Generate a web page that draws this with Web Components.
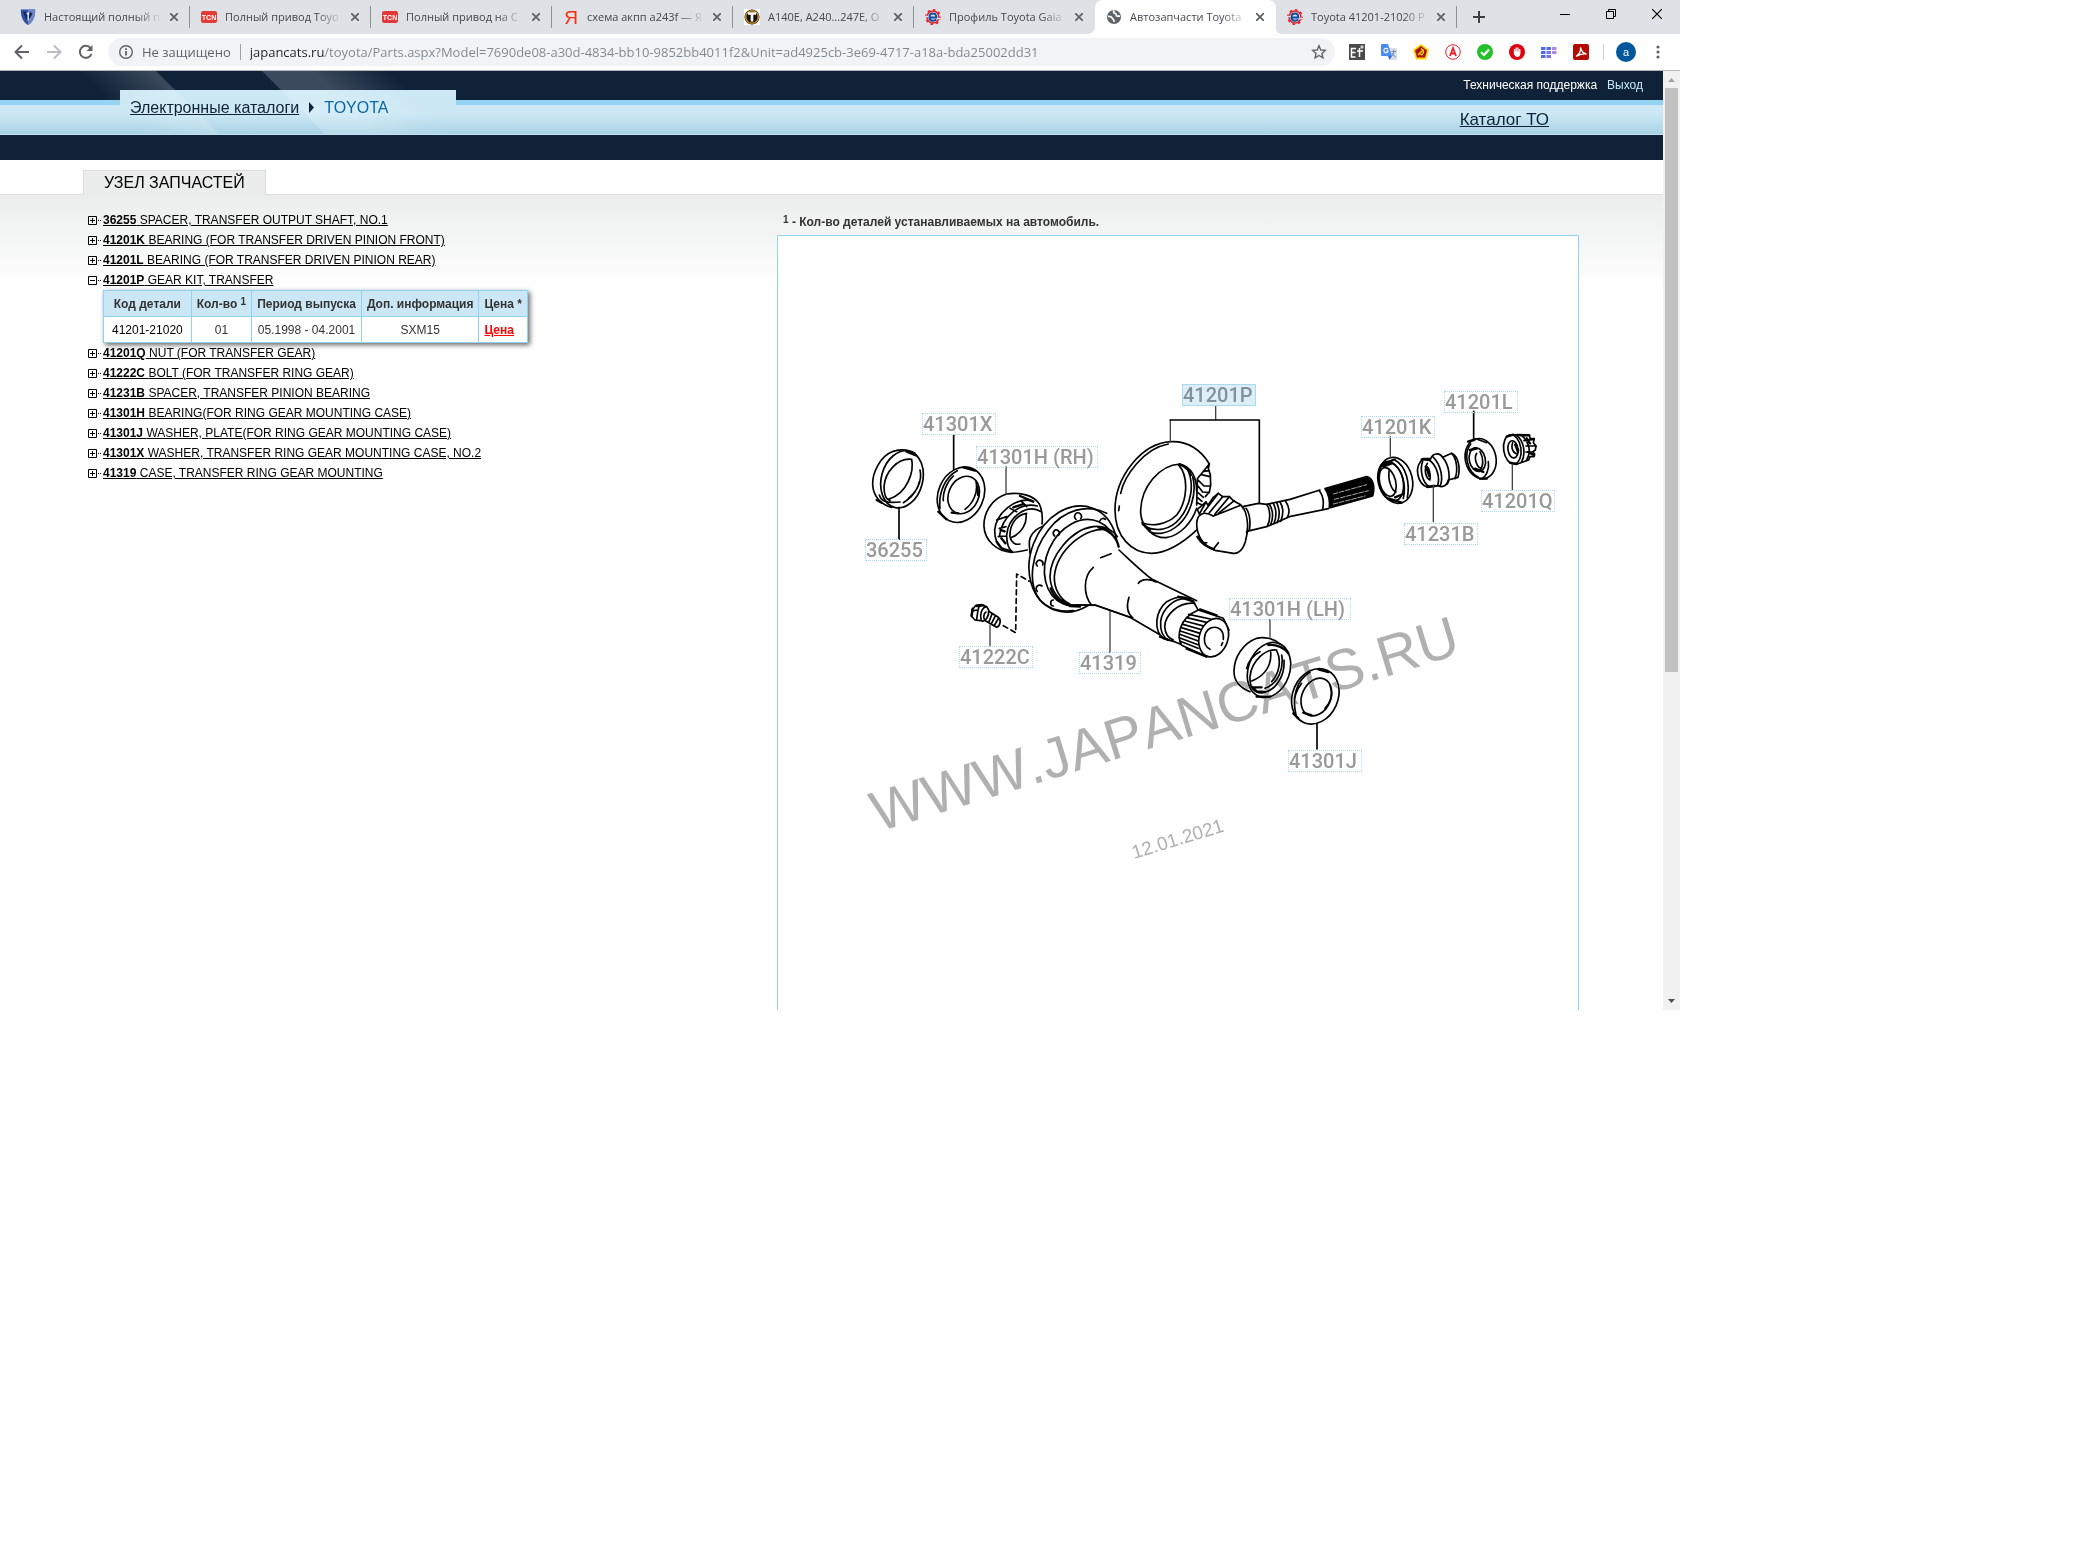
<!DOCTYPE html>
<html lang="ru">
<head>
<meta charset="utf-8">
<title>Автозапчасти Toyota</title>
<style>
    body {
        margin: 0;
        padding-right: 400px;
        background: #fff;
        font: 12px/20px "Liberation Sans", Arial, sans-serif;
        color: #333;
    }
</style>
</head>
<body>
<browser-window>
    <tab-strip slot="tabs">
        <browser-tab icon="shield">Настоящий полный п</browser-tab>
        <browser-tab icon="tcn">Полный привод Toyo</browser-tab>
        <browser-tab icon="tcn">Полный привод на C</browser-tab>
        <browser-tab icon="yandex">схема акпп a243f — Я</browser-tab>
        <browser-tab icon="tmark">A140E, A240...247E, О</browser-tab>
        <browser-tab icon="gear" last>Профиль Toyota Gaia</browser-tab>
        <browser-tab icon="globe" active>Автозапчасти Toyota</browser-tab>
        <browser-tab icon="gear">Toyota 41201-21020 P</browser-tab>
    </tab-strip>
    <address-bar slot="toolbar"></address-bar>
    <div>
        <site-header></site-header>
        <catalog-page>
            <part-row code="36255">SPACER, TRANSFER OUTPUT SHAFT, NO.1</part-row>
            <part-row code="41201K">BEARING (FOR TRANSFER DRIVEN PINION FRONT)</part-row>
            <part-row code="41201L">BEARING (FOR TRANSFER DRIVEN PINION REAR)</part-row>
            <part-row code="41201P" open>GEAR KIT, TRANSFER<part-table slot="details"></part-table></part-row>
            <part-row code="41201Q">NUT (FOR TRANSFER GEAR)</part-row>
            <part-row code="41222C">BOLT (FOR TRANSFER RING GEAR)</part-row>
            <part-row code="41231B">SPACER, TRANSFER PINION BEARING</part-row>
            <part-row code="41301H">BEARING(FOR RING GEAR MOUNTING CASE)</part-row>
            <part-row code="41301J">WASHER, PLATE(FOR RING GEAR MOUNTING CASE)</part-row>
            <part-row code="41301X">WASHER, TRANSFER RING GEAR MOUNTING CASE, NO.2</part-row>
            <part-row code="41319">CASE, TRANSFER RING GEAR MOUNTING</part-row>
            <parts-diagram slot="diagram"></parts-diagram>
        </catalog-page>
    </div>
    <page-scrollbar slot="scroll"></page-scrollbar>
</browser-window>

<script>
const UI_FONT = '"Open Sans", "Noto Sans", sans-serif';

const GEAR = `
    <circle cx="8" cy="8" r="6" fill="#dee1e6" stroke="#e5222a" stroke-width="1.6"/>
    <circle cx="8" cy="8" r="7.2" fill="none" stroke="#e5222a" stroke-width="1.600" stroke-dasharray="2.6 3"/>
    <path d="M4.6 8.600H11.300C11.400 5.600 10 4.400 8 4.400C5.800 4.400 4.400 5.800 4.400 8C4.400 10.400 5.900 11.700 8 11.700C9.400 11.700 10.400 11.300 11.200 10.500" fill="none" stroke="#0d4da1" stroke-width="2"/>
    <path d="M0 7.500H3.500M12.500 9.500H16" stroke="#dee1e6" stroke-width="1.500"/>`;

const FAVICONS = {
    shield: `
        <path d="M.8 .5H15.200C15.200 7 13.500 13 8 16C2.500 13 .8 7 .8 .5Z" fill="#2f4fa0"/>
        <path d="M8 .5H15.200C15.200 7 13.500 13 8 16Z" fill="#6f87c4"/>
        <path d="M3 3L7.200 12V3ZM10 2.500L8 12L12.500 5" fill="#16245c"/>
        <path d="M6 4L9 3V11L7.500 12V6Z" fill="#d6deee"/>`,
    tcn: `
        <rect x="0" y="2" width="16" height="12" rx="2" fill="#e23a36"/>
        <text x="8" y="11" text-anchor="middle" font-family="Liberation Sans" font-size="7" font-weight="700" fill="#fff">TCN</text>`,
    yandex: `<text x="8" y="15" text-anchor="middle" font-family="Liberation Sans" font-size="19" fill="#fc2f0f">Я</text>`,
    tmark: `
        <rect width="16" height="16" fill="#fff"/>
        <circle cx="8" cy="8" r="7.500" fill="#15120c"/>
        <circle cx="8" cy="8" r="6.300" fill="none" stroke="#c8912b" stroke-width="1.500"/>
        <path d="M4 4.500H12M8 4.500V12.500" stroke="#fff" stroke-width="2.600"/>`,
    gear: GEAR,
    globe: `
        <circle cx="8" cy="8" r="7" fill="#5f6368"/>
        <path d="M2 7.500C4 7 6 8 6.500 9.500C7 10.800 8.500 10.500 8 13M8.500 1.500C6.500 3 8 4.500 9.500 4.500C11.500 5 9 7 11.500 7.200H14" fill="none" stroke="#fff" stroke-width="1.700"/>`
};

/* ---------- browser chrome ---------- */

class BrowserWindow extends HTMLElement {
    constructor() {
        super();
        this.attachShadow({ mode: "open" }).innerHTML = `
            <style>
                :host { display: block; }
                .view { display: flex; border-top: 1px solid #b6b6b8; }
                .page { flex: 1; min-width: 0; }
            </style>
            <slot name="tabs"></slot>
            <slot name="toolbar"></slot>
            <div class="view">
                <div class="page"><slot></slot></div>
                <slot name="scroll"></slot>
            </div>
        `;
    }
}

class TabStrip extends HTMLElement {
    constructor() {
        super();
        this.attachShadow({ mode: "open" }).innerHTML = `
            <style>
                :host { display: flex; height: 34px; padding-left: 9px; background: #dee1e6; }
                button { display: block; border: 0; padding: 0; background: none; color: #3c4043; }
                .add { width: 44px; }
                .win { display: flex; margin-left: auto; }
                .win button { width: 46px; height: 28px; color: #000; }
                svg { display: block; margin: auto; fill: none; stroke: currentColor; }
            </style>
            <slot></slot>
            <button class="add" aria-label="Новая вкладка"><svg width="12" height="12" stroke-width="2"><path d="M6 0V12M0 6H12"/></svg></button>
            <div class="win">
                <button aria-label="Свернуть"><svg width="10" height="10"><path d="M0 5.500H10"/></svg></button>
                <button aria-label="Восстановить"><svg width="10" height="10"><path d="M.5 2.500H7.500V9.500H.5ZM2.500 2.500V.5H9.500V7.500H7.500"/></svg></button>
                <button aria-label="Закрыть"><svg width="10" height="10" stroke-width="1.200"><path d="M0 0L10 10M10 0L0 10"/></svg></button>
            </div>
        `;
    }
}

class BrowserTab extends HTMLElement {
    constructor() {
        super();
        this.attachShadow({ mode: "open" }).innerHTML = `
            <style>
                :host {
                    display: flex;
                    align-items: center;
                    box-sizing: border-box;
                    width: 181px;
                    padding: 0 7px 0 11px;
                    position: relative;
                    border-right: 1px solid #8f9297;
                    border-image: linear-gradient(transparent 7px, #8f9297 7px 27px, transparent 27px) 1;
                    font: 11px/34px ${UI_FONT};
                    color: #45484c;
                }
                :host([active]), :host([last]) { border-right-color: transparent; border-image: none; }
                :host([active]) { background: #fff; border-radius: 8px 8px 0 0; }
                :host([active])::before, :host([active])::after {
                    content: "";
                    position: absolute;
                    bottom: 0;
                    width: 8px;
                    height: 8px;
                }
                :host([active])::before { left: -8px; background: radial-gradient(circle at 0 0, transparent 8px, #fff 8px); }
                :host([active])::after { right: -8px; background: radial-gradient(circle at 100% 0, transparent 8px, #fff 8px); }
                .title {
                    flex: 1;
                    margin: 0 2px 0 8px;
                    white-space: nowrap;
                    -webkit-mask: linear-gradient(90deg, #000 calc(100% - 28px), transparent calc(100% - 2px));
                    mask: linear-gradient(90deg, #000 calc(100% - 28px), transparent calc(100% - 2px));
                }
                button { border: 0; padding: 4px; background: none; color: #5f6368; }
                svg { display: block; flex: none; }
            </style>
            <svg width="16" height="16">${FAVICONS[this.getAttribute("icon")]}</svg>
            <span class="title"><slot></slot></span>
            <button aria-label="Закрыть вкладку"><svg width="8" height="8" fill="none" stroke="currentColor" stroke-width="1.800"><path d="M0 0L8 8M8 0L0 8"/></svg></button>
        `;
    }
}

class AddressBar extends HTMLElement {
    constructor() {
        super();
        this.attachShadow({ mode: "open" }).innerHTML = `
            <style>
                :host {
                    display: flex;
                    align-items: center;
                    height: 36px;
                    padding-left: 6px;
                    padding-right: 12px;
                    background: #fff;
                    font: 13px/28px ${UI_FONT};
                    color: #5f6368;
                }
                button { flex: none; width: 32px; height: 28px; border: 0; padding: 0; background: none; color: #5f6368; }
                svg { display: block; margin: auto; }
                .box {
                    flex: 1;
                    display: flex;
                    align-items: center;
                    height: 28px;
                    margin: 0 6px;
                    padding-left: 10px;
                    border-radius: 14px;
                    background: #f1f3f4;
                }
                .box > svg { margin: 0 8px 0 0; }
                .sep { width: 1px; height: 16px; margin: 0 9px; background: #9aa0a6; }
                .bar { width: 1px; height: 16px; margin: 0 6px; background: #d0d2d5; }
                input {
                    flex: 1;
                    min-width: 0;
                    border: 0;
                    padding: 0;
                    outline: 0;
                    font: inherit;
                    color: transparent;
                    background: linear-gradient(90deg, #202124 74px, #80868b 74px);
                    -webkit-background-clip: text;
                    background-clip: text;
                }
                .menu { width: 20px; margin-left: 6px; }
            </style>
            <button aria-label="Назад"><svg width="16" height="16" fill="none" stroke="currentColor" stroke-width="2"><path d="M15 8H2M8 1.500L1.500 8L8 14.500"/></svg></button>
            <button aria-label="Вперёд"><svg width="16" height="16" fill="none" stroke="#babcbe" stroke-width="2"><path d="M1 8H14M8 1.500L14.500 8L8 14.500"/></svg></button>
            <button aria-label="Обновить"><svg width="16" height="16" fill="none" stroke="currentColor" stroke-width="2"><path d="M13.500 10A6 6 0 1 1 12.500 4"/><path d="M14.500 1V7H8.500Z" fill="currentColor" stroke="none"/></svg></button>
            <div class="box">
                <svg width="16" height="16" fill="none" stroke="currentColor"><circle cx="8" cy="8" r="6.300" stroke-width="1.400"/><path d="M8 7V11.500M8 4.300V6" stroke-width="1.800"/></svg>
                <span id="sec">Не защищено</span>
                <span class="sep"></span>
                <input aria-labelledby="sec" value="japancats.ru/toyota/Parts.aspx?Model=7690de08-a30d-4834-bb10-9852bb4011f2&amp;Unit=ad4925cb-3e69-4717-a18a-bda25002dd31">
                <button aria-label="Добавить в закладки"><svg width="16" height="16" fill="none" stroke="currentColor" stroke-width="1.400"><path d="M8 1.800L9.800 6L14.300 6.400L10.900 9.400L11.900 13.800L8 11.500L4.100 13.800L5.100 9.400L1.700 6.400L6.200 6Z"/></svg></button>
            </div>
            <button aria-label="ET"><svg width="16" height="16"><path d="M0 0H16V16H0Z" fill="#4b4b4b"/><path d="M7 4.500H2.500V13H6.500M2.500 8.500H6.500M8 7H14M10.500 4V13" fill="none" stroke="#fff" stroke-width="1.500"/><circle cx="13" cy="3" r="1.700" fill="#ccc"/></svg></button>
            <button aria-label="Переводчик"><svg width="16" height="16"><path d="M6 4H15Q16 4 16 5V15Q16 16 15 16H9Z" fill="#d9dce0"/><path d="M1 0H7L11 12H1Q0 12 0 11V1Q0 0 1 0Z" fill="#4a8af4"/><path d="M7 12H11L8.500 16Z" fill="#3367d6"/><path d="M7 5.500A2.200 2.200 0 1 0 7.200 7H5.200" fill="none" stroke="#fff" stroke-width="1.100"/><path d="M10.500 7.500H15M12.800 6V7.500C12.500 10 11.800 11.500 10.500 12.500M11.500 9Q12.500 12 14.800 13" fill="none" stroke="#6b8dad"/></svg></button>
            <button aria-label="Совет"><svg width="16" height="16"><path d="M8 0L16 5.800L13 15.500H3L0 5.800Z" fill="#ffd400"/><path d="M8 2L14 6.500L12 13.500H4L2 6.500Z" fill="#a61311"/><path d="M5 11L10.500 5.500M8 4.500Q12.500 7 9 11L6 9" fill="none" stroke="#ffd400" stroke-width="1.300"/></svg></button>
            <button aria-label="A"><svg width="16" height="16" fill="none" stroke="#e8212d"><circle cx="8" cy="8" r="7.300" fill="#fff"/><path d="M5 12L8 4L11 12M6 9.500H10" stroke-width="1.800"/></svg></button>
            <button aria-label="Проверка"><svg width="16" height="16"><circle cx="8" cy="8" r="8" fill="#23c02b"/><path d="M4 8.300L7 11L12 5.500" fill="none" stroke="#fff" stroke-width="2.200"/></svg></button>
            <button aria-label="Блокировщик"><svg width="16" height="16"><circle cx="8" cy="8" r="8" fill="#e1000f"/><path d="M5.500 9V5M7.200 8V3.500M9 8V3.500M10.700 9V5" stroke="#fff" stroke-width="1.300"/><path d="M4.900 7.500H11.300V10Q11 13 8.500 13Q6.500 13 4.900 10.500Z" fill="#fff"/></svg></button>
            <button aria-label="Сетка"><svg width="16" height="16"><path d="M0 3H4.500V6H0ZM5.500 3H10V6H5.500ZM0 7H4.500V10H0ZM0 11H4.500V14H0Z" fill="#4f6bee"/><path d="M11 3H15.500V6H11ZM11 7H15.500V10H11Z" fill="#b387dd"/><path d="M5.500 7H10V10H5.500ZM5.500 11H10V14H5.500Z" fill="#7b74e6"/></svg></button>
            <button aria-label="PDF"><svg width="16" height="16"><rect width="16" height="16" rx="2" fill="#b30b00"/><path d="M3 12.500C6 10.500 8 7 7.500 3.500C8.500 8 10.500 9.500 13.500 10C10 9.500 6 10.500 3 12.500Z" fill="none" stroke="#fff" stroke-width="1.300"/></svg></button>
            <span class="bar"></span>
            <button aria-label="Профиль"><svg width="20" height="20"><circle cx="10" cy="10" r="10" fill="#01579b"/><text x="10" y="14" text-anchor="middle" font-size="11" fill="#fff">a</text></svg></button>
            <button class="menu" aria-label="Меню"><svg width="4" height="16" fill="currentColor"><circle cx="2" cy="3" r="1.600"/><circle cx="2" cy="8" r="1.600"/><circle cx="2" cy="13" r="1.600"/></svg></button>
        `;
    }
}

class PageScrollbar extends HTMLElement {
    constructor() {
        super();
        this.attachShadow({ mode: "open" }).innerHTML = `
            <style>
                :host { display: flex; flex-direction: column; width: 17px; background: #f1f1f1; }
                svg { display: block; flex: none; }
                .track { flex: 1; padding: 0 2px; }
                .thumb { height: 64.500%; background: #c1c1c1; }
            </style>
            <svg width="17" height="17"><path d="M5 11H12L8.500 7Z" fill="#a3a3a3"/></svg>
            <div class="track"><div class="thumb"></div></div>
            <svg width="17" height="17"><path d="M5 6H12L8.500 10Z" fill="#505050"/></svg>
        `;
    }
}

/* ---------- site ---------- */

class SiteHeader extends HTMLElement {
    constructor() {
        super();
        this.attachShadow({ mode: "open" }).innerHTML = `
            <style>
                :host { display: block; position: relative; border-bottom: 25px solid #102238; }
                .glare { position: absolute; top: 0; left: 0; }
                .top {
                    display: flex;
                    justify-content: flex-end;
                    gap: 10px;
                    height: 22px;
                    padding: 7px 20px 0 0;
                    background: #102238;
                    line-height: 14px;
                }
                .top a { color: #fff; text-decoration: none; }
                .top a + a { color: #c4ebfa; }
                .strip {
                    display: flex;
                    justify-content: space-between;
                    height: 29px;
                    padding-right: 114px;
                    border-top: 5px solid #95d3f2;
                    border-bottom: 1px solid #c3e2ef;
                    background: linear-gradient(#cce8f4 30%, #a9d2e5);
                    font-size: 16px;
                    line-height: 24px;
                }
                nav {
                    display: flex;
                    align-items: flex-start;
                    box-sizing: border-box;
                    width: 336px;
                    margin: -15px 0 0 120px;
                    padding: 6px 10px 0;
                    background: linear-gradient(#cce8f4 15px, transparent 15px);
                }
                nav svg { margin: 6px 10px 0; }
                nav b { font-weight: 400; color: #0867a7; }
                nav a, nav b, nav svg { position: relative; z-index: 1; }
                .strip a { color: #102238; }
                .strip .to { margin-top: 3px; font-size: 17px; }
            </style>
            <div class="top"><a href="#support">Техническая поддержка</a><a href="#exit">Выход</a></div>
            <div class="strip">
                <nav>
                    <a href="#catalogs">Электронные каталоги</a>
                    <svg width="5" height="11"><path d="M0 0L5 5.500L0 11Z" fill="#102238"/></svg>
                    <b>TOYOTA</b>
                </nav>
                <a class="to" href="#to">Каталог ТО</a>
            </div>
            <svg class="glare" width="460" height="63">
                <linearGradient id="g1" gradientUnits="userSpaceOnUse" x1="156" y1="0" x2="116" y2="40"><stop stop-color="#fff" stop-opacity=".18"/><stop offset="1" stop-color="#fff" stop-opacity="0"/></linearGradient>
                <linearGradient id="g2" gradientUnits="userSpaceOnUse" x1="262" y1="0" x2="326" y2="-64"><stop stop-color="#fff" stop-opacity=".18"/><stop offset=".4" stop-color="#fff" stop-opacity=".18"/><stop offset="1" stop-color="#fff" stop-opacity="0"/></linearGradient>
                <path d="M60 0H156L219 63H60Z" fill="url(#g1)"/>
                <path d="M262 0H460V63H325Z" fill="url(#g2)"/>
            </svg>
        `;
    }
}

class CatalogPage extends HTMLElement {
    constructor() {
        super();
        this.attachShadow({ mode: "open" }).innerHTML = `
            <style>
                :host { display: block; }
                header { padding: 10px 83px 0; border-bottom: 1px solid #dcdcdc; }
                h1 {
                    width: max-content;
                    margin: 0 0 -1px;
                    padding: 0 20px;
                    border: 1px solid #dcdcdc;
                    border-bottom: 0;
                    background: #ebeded;
                    font-size: 16px;
                    font-weight: 400;
                    line-height: 24px;
                    color: #000;
                }
                main {
                    display: grid;
                    grid-template-columns: 1fr 802px;
                    padding: 0 84px 0 83px;
                    background: linear-gradient(#ebeded, #fff 95px);
                }
                .tree { padding: 15px 0 0 5px; }
                .note { margin: 0; padding: 17px 0 3px 6px; font-weight: 700; }
                sup { font-size: 10px; line-height: 0; vertical-align: 3px; }
            </style>
            <header><h1>УЗЕЛ ЗАПЧАСТЕЙ</h1></header>
            <main>
                <div class="tree"><slot></slot></div>
                <div>
                    <p class="note"><sup>1</sup> - Кол-во деталей устанавливаемых на автомобиль.</p>
                    <slot name="diagram"></slot>
                </div>
            </main>
        `;
    }
}

class PartRow extends HTMLElement {
    constructor() {
        super();
        const open = this.hasAttribute("open");
        this.attachShadow({ mode: "open" }).innerHTML = `
            <style>
                :host { display: block; }
                .row { display: flex; align-items: center; height: 20px; }
                button { width: 15px; height: 9px; border: 0; padding: 0; background: none; }
                svg { display: block; fill: none; stroke: #000; }
                a { color: #000; }
                ::slotted([slot=details]) { margin-left: 15px; }
            </style>
            <div class="row">
                <button aria-label="Показать детали"><svg width="15" height="9"><path d="M.5 .5H8.500V8.500H.5ZM2 4.500H7${open ? "" : "M4.500 2V7"}M10 4.500H11M12 4.500H13"/></svg></button>
                <a href="#${this.getAttribute("code")}"><b>${this.getAttribute("code")}</b> <slot></slot></a>
            </div>
            <slot name="details"></slot>
        `;
    }
}

class PartTable extends HTMLElement {
    constructor() {
        super();
        this.attachShadow({ mode: "open" }).innerHTML = `
            <style>
                :host { display: block; width: max-content; box-shadow: 2px 2px 5px rgba(0,0,0,0.6); }
                table { border-collapse: collapse; background: #fff; line-height: 14px; text-align: center; }
                th, td { height: 25px; padding: 0 5px; border: 1px solid #8fd2f2; }
                th { background: #cbe7f5; }
                tr > :first-child { padding: 0 8px; }
                td:first-child { color: #000; }
                td:last-child { text-align: left; }
                sup { font-size: 10px; line-height: 0; vertical-align: 3px; }
                a { font-weight: 700; color: #f00; }
            </style>
            <table>
                <tr><th>Код детали</th><th>Кол-во <sup>1</sup></th><th>Период выпуска</th><th>Доп. информация</th><th>Цена *</th></tr>
                <tr><td>41201-21020</td><td>01</td><td>05.1998 - 04.2001</td><td>SXM15</td><td><a href="#price">Цена</a></td></tr>
            </table>
        `;
    }
}

class CalloutLabel extends HTMLElement {
    constructor() {
        super();
        this.attachShadow({ mode: "open" }).innerHTML = `
            <style>
                :host { position: absolute; display: block; }
                a {
                    display: block;
                    height: 20px;
                    border: 1px dotted #a9dbf0;
                    font: 500 20px/20px Roboto, "Liberation Sans", sans-serif;
                    white-space: nowrap;
                    color: #999;
                    text-decoration: none;
                }
                :host([active]) a { border-style: solid; background: #ddeef7; color: #82929b; }
            </style>
            <a href="#"><slot></slot></a>
        `;
    }
}

// callouts of the picture: code, left, top, width
const CALLOUTS = [
    ["41301X", 144, 177, 74], ["41301H (RH)", 198, 210, 122], ["36255", 87, 303, 62], ["41222C", 181, 410, 74],
    ["41201P", 404, 148, 74, true], ["41201K", 583, 180, 74], ["41201L", 666, 155, 74], ["41201Q", 703, 254, 74],
    ["41231B", 626, 287, 74], ["41319", 301, 416, 62], ["41301H (LH)", 451, 362, 122], ["41301J", 510, 514, 74]
];

class PartsDiagram extends HTMLElement {
    constructor() {
        super();
        const labels = CALLOUTS.map(([code, x, y, w, active]) =>
            `<callout-label style="left:${x}px;top:${y}px;width:${w}px" ${active ? "active" : ""}>${code}</callout-label>`).join("");

        // splines on the case end
        let splines = "";
        for (let i = 0; i < 9; i++) {
            const y = 703 + i * 10;
            const x = 566 - Math.round(Math.sin(i / 8 * 1.8) * 28);
            const ex = 640 - Math.round(Math.sin((i + 1) / 9 * 1.7) * 46);
            splines += `M${x} ${y}L${ex} ${y + 14 + i}`;
        }

        this.attachShadow({ mode: "open" }).innerHTML = `
            <style>
                :host {
                    display: block;
                    position: relative;
                    height: 774px;
                    border: 1px solid #95d3f2;
                    border-bottom: 0;
                    background: #fff;
                }
                svg { display: block; }
                .ink { fill: none; stroke: #000; stroke-width: 5; stroke-linecap: round; stroke-linejoin: round; }
                .w { fill: #fff; }
                .k { fill: #000; }
                .t { stroke-width: 7; }
                .lead { stroke: #444; stroke-width: 4; }
                .mark { font-family: "Liberation Sans", sans-serif; font-kerning: none; fill: #b0b0b0; mix-blend-mode: darken; }
            </style>
            <svg width="800" height="774" viewBox="778 236 800 774">
                <!-- ring gear, pinion and shaft -->
                <g class="ink" transform="translate(1000 380) scale(.33333)">
                    <path class="w" d="M592 448C550 488 505 518 455 520C395 520 345 470 345 390C345 290 425 190 512 185C565 182 605 212 628 252L592 298Z" stroke="none"/>
                    <path d="M592 448C550 488 505 518 455 520C395 520 345 470 345 390C345 290 425 190 512 185C565 182 605 212 628 252"/>
                    <path d="M505 192C430 205 372 290 362 340M358 378L356 392"/>
                    <path class="w" d="M540 252C480 255 420 320 422 400C426 445 462 475 498 473C538 468 575 430 590 385"/>
                    <path d="M540 252C575 262 590 290 590 335"/>
                    <path d="M535 254C568 290 562 365 530 405C500 435 455 440 426 428M560 262C585 310 575 370 540 415C510 452 470 455 436 440M578 290C592 340 570 405 535 435C505 462 470 465 450 455"/>
                    <path class="t" d="M540 254C560 262 570 275 573 285M428 432L450 450"/>
                    <path d="M628 252L592 296M628 252L625 266L631 284L632 316L628 336L616 350M592 296L590 375M592 298L612 318L629 318M594 318L608 336L628 338M592 336L610 352M592 352L606 364M592 368L604 374M604 284L630 290M612 274L628 272"/>
                    <path class="w" d="M598 402L592 388L618 366L624 376L640 352L655 340L668 350L688 350L700 362L722 374C742 400 748 440 736 485C728 512 712 522 700 520L645 511C610 498 590 468 590 430C592 400 612 392 640 408"/>
                    <path d="M598 402L618 366M612 396L655 340M628 398L668 350M645 402L688 350M655 400L703 362M640 408L722 376M592 470C598 480 610 492 620 488M655 488L640 508"/>
                    <path class="t" d="M592 470C605 492 620 500 642 508"/>
                    <path class="w" d="M728 380L775 370L800 373L960 330L980 325L985 388L865 410L800 438L740 455Z" stroke="none"/>
                    <path d="M728 380L775 370L800 373L870 358L960 330M740 455L750 452L800 440L828 428L868 410L985 386M728 380C742 400 746 440 740 460M738 385C750 400 752 430 748 450"/>
                    <path d="M800 373C812 390 812 420 802 438M808 372C820 392 820 414 812 434M820 370C830 390 830 410 822 430M830 368C838 385 840 408 832 428M840 366C850 382 850 405 842 424M856 362C868 380 870 398 862 412M958 332C968 345 972 368 968 388"/>
                    <path class="k" d="M975 326L1100 290C1120 295 1126 320 1118 348L988 384C990 360 985 340 975 326Z"/>
                    <path d="M1000 342L1100 314M1003 358L1105 332M1000 372L1095 348" stroke="#fff" stroke-width="2" stroke-dasharray="14 5"/>
                    <!-- bracket of the gear kit -->
                    <path class="lead" d="M647 76V120M511 120V185"/>
                    <path d="M511 120H778V368"/>
                </g>

                <!-- left side: rings, bearing, flange, bolt -->
                <g class="ink" transform="translate(840 370) scale(.33333)">
                    <path d="M225 250C205 238 180 238 160 244C120 258 96 310 98 345C100 375 118 402 155 412"/>
                    <ellipse cx="186" cy="328" rx="62" ry="87" transform="rotate(15 186 328)"/>
                    <path d="M215 268C175 262 135 305 132 350C132 375 138 388 150 392M215 268C222 300 205 370 145 388M240 300C248 330 230 375 190 398M205 385C225 370 235 350 238 335M118 375C124 395 140 400 180 396"/>
                    <path class="t" d="M200 245L228 256M110 390L125 398"/>
                    <ellipse cx="363" cy="374" rx="68" ry="86" transform="rotate(24 363 374)"/>
                    <ellipse cx="371" cy="375" rx="45" ry="58" transform="rotate(24 371 375)"/>
                    <path d="M352 302C315 320 295 370 300 415M340 318C318 338 308 370 310 392M408 335C415 365 400 400 375 418"/>
                    <path class="t" d="M370 292L405 302M295 425L320 448M335 428L355 430M412 350L414 375"/>
                    <path d="M598 402C580 375 540 366 500 372C455 385 430 430 432 470C434 510 470 545 515 547C540 546 560 540 562 540M598 402C606 420 608 445 606 462"/>
                    <path d="M575 392C530 382 470 425 464 480C464 510 475 530 490 538M592 408C540 395 485 440 478 500M604 425C560 400 505 440 500 495C500 520 505 535 515 545M560 430C525 435 508 470 510 500C514 520 528 525 540 522M558 432C562 460 545 490 515 502M470 450L500 440M478 475L498 470M475 500L498 498M510 415L530 425M545 395L560 410"/>
                    <path class="t" d="M540 378L580 395M470 515L485 535L515 545M520 412L550 402M482 480L494 484M484 505L496 520"/>
                    <path class="w" d="M640 468C600 460 565 490 568 525L570 550"/>
                    <ellipse class="w" cx="700" cy="567" rx="128" ry="163" transform="rotate(21 700 567)"/>
                    <path d="M800 430C740 400 670 420 625 480C575 545 560 640 600 690C625 718 660 726 700 722"/>
                    <ellipse class="w" cx="722" cy="578" rx="103" ry="134" transform="rotate(24 722 578)"/>
                    <path class="w" d="M838 540C830 490 800 465 760 470C690 480 630 560 630 620C632 665 660 700 690 705L770 706L900 760L1080 770L900 598Z" stroke="none"/>
                    <path d="M832 500C820 480 790 466 760 470C690 480 630 560 630 620C632 665 660 700 700 706M805 480C740 465 650 540 643 620C642 655 660 690 690 702"/>
                    <path class="t" d="M632 655C642 685 665 700 690 706M775 472C805 478 830 500 836 530M690 708L720 710"/>
                    <path d="M708 448A10 11 0 1 1 722 446M644 498A9 10 0 1 1 656 496M780 452A10 11 0 0 1 796 448M608 585A10 10 0 1 0 592 588M606 648A10 10 0 1 0 592 664M640 690A8 9 0 1 0 640 708"/>
                    <path d="M690 705L765 705L870 742"/>
                    <!-- bolt -->
                    <path d="M408 706L396 720L394 738L405 750L420 752M408 706L425 704L440 710M400 722L414 720L418 708M414 720L410 748M440 710C425 712 418 735 424 752C436 758 448 738 446 720ZM438 726C430 730 430 745 434 750"/>
                    <path d="M446 724L475 742C484 748 482 766 470 772L436 752M456 732L446 758M466 738L454 762M476 744L462 768"/>
                    <path class="t" d="M398 716L395 738M410 708L430 706"/>
                    <path d="M490 767L527 788L530 612L568 634" stroke-dasharray="15 11"/>
                    <path class="lead" d="M450 765V828M810 722V848M498 290V372"/>
                    <path d="M341 195V300M177 412V508"/>
                </g>

                <!-- case body -->
                <g class="ink" transform="translate(1000 380) scale(.33333)">
                    <path d="M357 510C400 550 425 575 455 597L590 662M225 675H285L390 712L490 770M280 562C248 590 250 645 275 676M302 533L333 521M415 610C425 596 450 596 468 606M387 652C378 680 382 700 398 714"/>
                    <path class="w" d="M582 668C560 645 530 648 500 665C465 695 460 750 490 775L520 784L560 800L600 700Z"/>
                    <path d="M570 656C520 650 485 690 482 725C480 755 490 772 505 780M584 670C535 665 495 705 494 740C496 765 505 775 520 780"/>
                    <path class="w" d="M595 690L670 715L687 750L620 830L545 796C530 770 535 715 595 690Z"/>
                    <path d="${splines}"/>
                    <ellipse class="w" cx="641" cy="773" rx="43" ry="59" transform="rotate(18 641 773)"/>
                    <path d="M630 808C605 795 610 755 632 744C655 736 672 750 670 778M668 788L664 796"/>
                    <path class="t" d="M535 650L580 664M560 806L620 830M600 688L650 706M480 770L505 780"/>
                </g>

                <!-- right side bearings and nut -->
                <g class="ink" transform="translate(1340 370) scale(.33333)">
                    <ellipse cx="167" cy="331" rx="50" ry="70" transform="rotate(-14 167 331)"/>
                    <ellipse cx="152" cy="334" rx="37" ry="60" transform="rotate(-14 152 334)"/>
                    <ellipse cx="143" cy="336" rx="24" ry="44" transform="rotate(-14 143 336)"/>
                    <path d="M148 298C142 330 155 360 168 366M150 276C185 290 200 340 190 385M165 270C200 290 210 340 202 384M118 300L130 280L165 268"/>
                    <path class="t" d="M125 285L160 270M145 385L185 398M130 290L155 280M165 382L190 372"/>
                    <path class="w" d="M250 266L272 266C278 250 298 246 308 262L335 250C355 258 362 295 354 322L325 330C320 350 305 353 295 347L262 352C232 340 220 290 250 266Z"/>
                    <path d="M262 266C295 285 300 330 292 348M278 260C305 285 310 330 300 348M308 262C328 285 332 325 322 342M335 250C350 265 355 300 345 326M248 274C238 300 248 340 268 350M262 280C250 300 258 325 270 330M256 290C262 285 272 300 270 330"/>
                    <path class="t" d="M245 268L270 270M258 290L268 318M262 350L285 348"/>
                    <ellipse cx="422" cy="266" rx="46" ry="61" transform="rotate(-12 422 266)"/>
                    <ellipse cx="412" cy="269" rx="24" ry="36" transform="rotate(-12 412 269)"/>
                    <path d="M392 222C370 250 380 305 415 322M410 250C400 265 412 295 425 295M420 245C432 265 430 290 420 300M445 275C448 295 440 318 428 324M412 208L440 218"/>
                    <path class="t" d="M390 240L410 236M405 296L430 306M384 215L405 208M420 326L440 326"/>
                    <path class="w" d="M510 196L535 194L568 195L570 205L583 206L580 218L588 228L586 240L578 246L584 252L582 260L570 260L566 270L530 283Z"/>
                    <ellipse class="w" cx="517" cy="238" rx="26" ry="44" transform="rotate(-8 517 238)"/>
                    <ellipse cx="519" cy="238" rx="15" ry="26" transform="rotate(-8 519 238)"/>
                    <path d="M530 196C555 215 556 255 545 275M545 196C572 220 572 250 560 270M552 212L582 208M558 228L588 228M558 246L580 246M518 218C512 235 520 250 532 252M525 225L536 240"/>
                    <path class="t" d="M500 200L520 194M540 196L568 196M560 205L570 220M565 246L582 256M510 278L530 282M526 224L534 246"/>
                    <path class="lead" d="M151 200V262M517 283V360M280 345V455"/>
                    <path d="M401 124V212"/>
                </g>

                <!-- lower rings -->
                <g class="ink" transform="translate(1080 580) scale(.33333)">
                    <path d="M600 192C580 174 550 170 530 175C490 190 462 230 462 275C462 302 478 322 510 335"/>
                    <ellipse cx="567" cy="270" rx="62" ry="85" transform="rotate(20 567 270)"/>
                    <path d="M590 210C560 205 515 240 510 290C508 325 525 342 550 338C590 330 615 285 612 240M572 216C576 260 550 290 515 303M590 212C605 240 598 280 575 305M605 225C612 265 595 310 555 325M500 265C505 245 520 225 540 215"/>
                    <path class="t" d="M565 195C590 192 615 205 625 220M515 320L530 334L556 336M520 322H545M530 350L570 350"/>
                    <ellipse cx="706" cy="349" rx="68" ry="86" transform="rotate(24 706 349)"/>
                    <ellipse cx="709" cy="351" rx="43" ry="59" transform="rotate(24 709 351)"/>
                    <path d="M690 277C650 300 635 350 648 405M665 310C650 330 642 350 644 370M750 315C760 345 750 370 735 385"/>
                    <path class="t" d="M715 268L745 276M640 400L655 415M670 398L695 406"/>
                    <path class="lead" d="M570 118V172"/>
                    <path d="M711 430V507"/>
                </g>

                <text class="mark" x="878" y="832" font-size="57" transform="rotate(-17 878 832)">WWW.JAPANCATS.RU</text>
                <text class="mark" x="1134" y="859" font-size="19" transform="rotate(-17 1134 859)">12.01.2021</text>
            </svg>
            ${labels}
        `;
    }
}

customElements.define("page-scrollbar", PageScrollbar);
customElements.define("callout-label", CalloutLabel);
customElements.define("parts-diagram", PartsDiagram);
customElements.define("part-table", PartTable);
customElements.define("part-row", PartRow);
customElements.define("catalog-page", CatalogPage);
customElements.define("site-header", SiteHeader);
customElements.define("browser-tab", BrowserTab);
customElements.define("tab-strip", TabStrip);
customElements.define("address-bar", AddressBar);
customElements.define("browser-window", BrowserWindow);
</script>
</body>
</html>
